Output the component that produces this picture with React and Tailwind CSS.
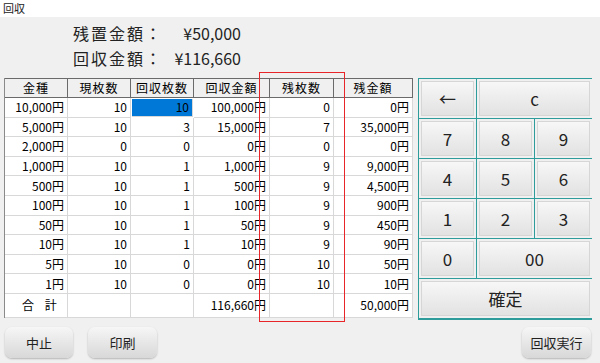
import React from "react";

const jp = { fontFamily: '"Noto Sans CJK JP", "Noto Sans", sans-serif' };

const rows = [
  ["10,000円", "10", "10", "100,000円", "0", "0円"],
  ["5,000円", "10", "3", "15,000円", "7", "35,000円"],
  ["2,000円", "0", "0", "0円", "0", "0円"],
  ["1,000円", "10", "1", "1,000円", "9", "9,000円"],
  ["500円", "10", "1", "500円", "9", "4,500円"],
  ["100円", "10", "1", "100円", "9", "900円"],
  ["50円", "10", "1", "50円", "9", "450円"],
  ["10円", "10", "1", "10円", "9", "90円"],
  ["5円", "10", "0", "0円", "10", "50円"],
  ["1円", "10", "0", "0円", "10", "10円"],
];

const headers = ["金種", "現枚数", "回収枚数", "回収金額", "残枚数", "残金額"];
const cols = "grid grid-cols-[63px_63px_63px_76px_64px_79px]";

function KeyButton({ label, className = "" }) {
  return (
    <div className={"bg-[#f0f0f0] p-[2px] " + className}>
      <button
        className="w-full h-full flex items-center justify-center bg-gradient-to-b from-[#f7f7f7] to-[#e2e2e2] border border-[#d6d6d6] text-[17px] text-[#222]"
        style={jp}
      >
        {label}
      </button>
    </div>
  );
}

function BottomButton({ label, className = "" }) {
  return (
    <button
      className={
        "h-[31px] rounded-[7px] bg-gradient-to-b from-[#f6f6f6] to-[#d8d8d8] shadow-[0_1px_2px_rgba(0,0,0,0.25)] text-[13px] text-[#222] " +
        className
      }
      style={jp}
    >
      {label}
    </button>
  );
}

export default function App() {
  return (
    <div className="relative w-[600px] h-[363px] bg-[#f0f0f0] flex flex-col overflow-hidden" style={jp}>
      {/* タイトル */}
      <div className="h-[17px] shrink-0 bg-white text-[11px] leading-[17px] pl-[3px] text-[#222]">回収</div>

      {/* 金額サマリー */}
      <div className="pl-[73px] pt-[4px] text-[16px] leading-[25px] text-[#222] whitespace-nowrap">
        <div className="flex">
          <span className="w-[100px] tracking-[2px]">残置金額：</span>
          <span className="w-[68px] text-right">¥50,000</span>
        </div>
        <div className="flex">
          <span className="w-[100px] tracking-[2px]">回収金額：</span>
          <span className="w-[68px] text-right">¥116,660</span>
        </div>
      </div>

      <div className="flex mt-[7px] pl-[4px] shrink-0">
        {/* テーブル */}
        <div className="w-[409px] h-[240px] bg-white border-l border-[#8a8a8a] text-[12px] text-black whitespace-nowrap">
          <div className={cols + " h-[20px] border-t border-[#6a6a6a]"}>
            {headers.map((h) => (
              <div
                key={h}
                className="flex items-center justify-center bg-[#f0f0f0] border-r border-b border-[#6a6a6a] tracking-[1px] leading-none"
              >
                {h}
              </div>
            ))}
          </div>
          {rows.map((r, i) => (
            <div key={i} className={cols + " h-[19.6px]"}>
              {r.map((c, j) => (
                <div
                  key={j}
                  className={
                    "flex items-center justify-end pr-[3px] border-r border-b border-[#d8d8d8] leading-none " +
                    (i === 0 && j === 2 ? "bg-[#0078d7] m-[1px]" : "")
                  }
                >
                  {c}
                </div>
              ))}
            </div>
          ))}
          <div className={cols + " h-[24px]"}>
            <div className="flex items-center pl-[17px] border-r border-b border-[#d8d8d8] tracking-[4px]">合 計</div>
            <div className="border-r border-b border-[#d8d8d8]" />
            <div className="border-r border-b border-[#d8d8d8]" />
            <div className="flex items-center justify-end pr-[3px] border-r border-b border-[#d8d8d8]">116,660円</div>
            <div className="border-r border-b border-[#d8d8d8]" />
            <div className="flex items-center justify-end pr-[3px] border-r border-b border-[#d8d8d8]">50,000円</div>
          </div>
        </div>

        {/* テンキー */}
        <div className="ml-[5px] w-[174px] h-[242px] border border-[#2f9c9c] bg-[#2f9c9c] grid grid-cols-[57px_57px_57px] grid-rows-[39px_39px_39px_39px_39px_39px] gap-[1px]">
          <KeyButton label="←" />
          <KeyButton label="c" className="col-span-2" />
          <KeyButton label="7" />
          <KeyButton label="8" />
          <KeyButton label="9" />
          <KeyButton label="4" />
          <KeyButton label="5" />
          <KeyButton label="6" />
          <KeyButton label="1" />
          <KeyButton label="2" />
          <KeyButton label="3" />
          <KeyButton label="0" />
          <KeyButton label="00" className="col-span-2" />
          <KeyButton label="確定" className="col-span-3" />
        </div>
      </div>

      {/* 下部ボタン */}
      <div className="flex mt-[7px] pl-[5px] pr-[9px]">
        <BottomButton label="中止" className="w-[68px]" />
        <BottomButton label="印刷" className="w-[69px] ml-[15px]" />
        <BottomButton label="回収実行" className="w-[69px] ml-auto" />
      </div>

      {/* 赤枠 */}
      <div className="absolute left-[259px] top-[72px] w-[86px] h-[250px] border-[1.5px] border-[#e8262a] pointer-events-none" />
    </div>
  );
}
